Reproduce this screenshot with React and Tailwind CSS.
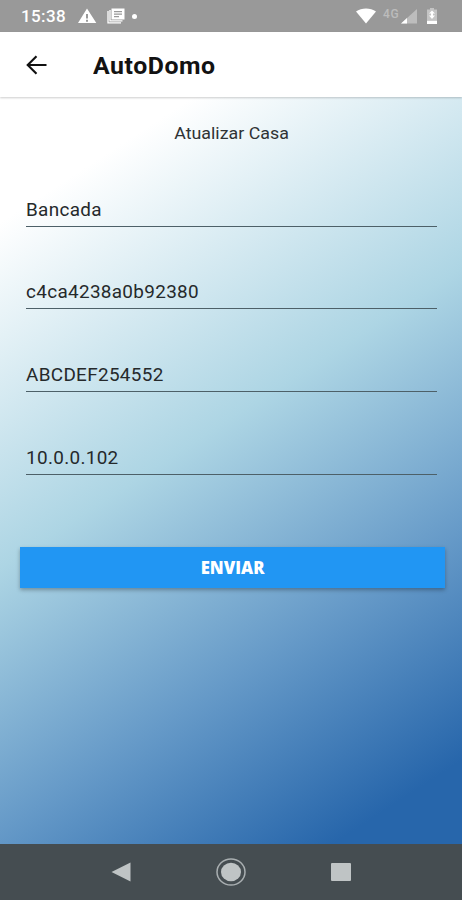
const fields = [
  { name: "nome", value: "Bancada" },
  { name: "chave", value: "c4ca4238a0b92380" },
  { name: "serial", value: "ABCDEF254552" },
  { name: "ip", value: "10.0.0.102" },
];

function StatusBar() {
  return (
    <div className="flex h-8 items-center bg-[#999999] pl-[21px] pr-[25px] text-white">
      <span className="w-[46px] pt-px text-[17px] font-medium tracking-[0.4px] whitespace-nowrap">15:38</span>
      <svg className="ml-[10px]" width="20" height="16" viewBox="0 0 20 16">
        <path fill="#fff" fillRule="evenodd" d="M10 .500 19.300 15H1ZM9 6v4.500h2V6ZM9 11.700v2h2v-2Z" />
      </svg>
      <svg className="ml-[10px]" width="18" height="16" viewBox="0 0 18 16">
        <path fill="#fff" fillRule="evenodd" d="M4.500.5h13v11h-13ZM7 3v1.300h8V3ZM7 5.500v1.300h8V5.500ZM7 8v1.300h5V8Z" />
        <path fill="none" stroke="#fff" strokeWidth="1.300" d="M1 3v11.800h13M3 2v10.800h12.500" />
      </svg>
      <span className="ml-[7px] size-[5px] rounded-full bg-white" />
      <svg className="ml-auto" width="20" height="16" viewBox="0 0 20 16">
        <path fill="#fff" d="M0 3.500C5.500-.5 14.500-.5 20 3.500L10 15.500Z" />
      </svg>
      <span className="-mt-1 ml-[7px] w-[17px] text-[12px] font-medium tracking-[0.6px] text-[#bcbcbc]">4G</span>
      <svg className="ml-[1px]" width="16" height="15" viewBox="0 0 16 15">
        <path fill="#bdbdbd" d="M16 0v14.500H0Z" />
        <path fill="#fff" d="M6 9v5.500H0Z" />
      </svg>
      <svg className="ml-[10px]" width="10" height="16" viewBox="0 0 10 16">
        <path fill="#c4c4c4" d="M3 0h4v1.500h3V12H0V1.500h3Z" />
        <path fill="#fff" d="M0 12.500h10V16H0ZM5 2.500l3 3H6v2h2l-3 3.500-3-3.500h2v-2H2Z" />
      </svg>
    </div>
  );
}

function Header() {
  return (
    <header className="relative flex h-[65px] items-center bg-white pl-[26px] shadow-[0_1px_2px_rgba(0,0,0,0.2)]">
      <svg width="21" height="20" viewBox="0 0 21 20" fill="none" stroke="#111" strokeWidth="2.100">
        <path d="M20.500 10H2M10.500 1.200 1.700 10l8.800 8.800" />
      </svg>
      <h1 className="ml-[46px] origin-left scale-x-[1.08] pt-[6px] text-[23px] font-bold tracking-[0.5px] text-[#121212]">
        AutoDomo
      </h1>
    </header>
  );
}

function NavBar() {
  return (
    <nav className="flex h-[56px] items-center justify-between bg-[#454d51] px-[111px]">
      <svg width="20" height="20" viewBox="0 0 20 20">
        <path fill="#bfc4c5" d="M19.500.5v19L.5 10Z" />
      </svg>
      <svg width="30" height="28" viewBox="0 0 30 28">
        <ellipse cx="15" cy="14" rx="14" ry="13" fill="none" stroke="#a9afb1" strokeWidth="1.500" />
        <ellipse cx="15" cy="14" rx="10" ry="9.300" fill="#bfc4c5" />
      </svg>
      <span className="h-[18px] w-[20px] rounded-[1px] bg-[#bfc4c5]" />
    </nav>
  );
}

export default function App() {
  return (
    <div className="flex h-[900px] w-[462px] flex-col overflow-hidden font-['Roboto',sans-serif]">
      <StatusBar />
      <Header />
      <main className="flex-1 bg-[linear-gradient(147deg,#ffffff_0%,#ffffff_12%,#add5e4_45%,#669ac8_70%,#2766ab_92%)] px-5">
        <p className="scale-x-[1.08] pt-[25px] pl-px text-center text-[16.5px] leading-6 text-[#2f3335]">
          Atualizar Casa
        </p>
        <form className="px-[6px] pt-[45.7px]">
          {fields.map((field) => (
            <div key={field.name} className="mb-[47.67px] h-[35px] w-[411px] border-b border-[#4d6068]">
              <input
                name={field.name}
                defaultValue={field.value}
                className="block h-[34px] w-[380px] origin-left scale-x-[1.08] bg-transparent pt-[2px] text-[17.5px] tracking-[0.3px] text-[#25292b] outline-none"
              />
            </div>
          ))}
        </form>
        <button className="mt-[72px] block h-[41px] w-[425px] bg-[#2196f3] pt-[2px] font-['Open_Sans',sans-serif] text-[17px] font-extrabold text-white shadow-[0_2px_4px_rgba(0,0,0,0.3)]">
          <span className="inline-block scale-x-[0.98]">ENVIAR</span>
        </button>
      </main>
      <NavBar />
    </div>
  );
}
